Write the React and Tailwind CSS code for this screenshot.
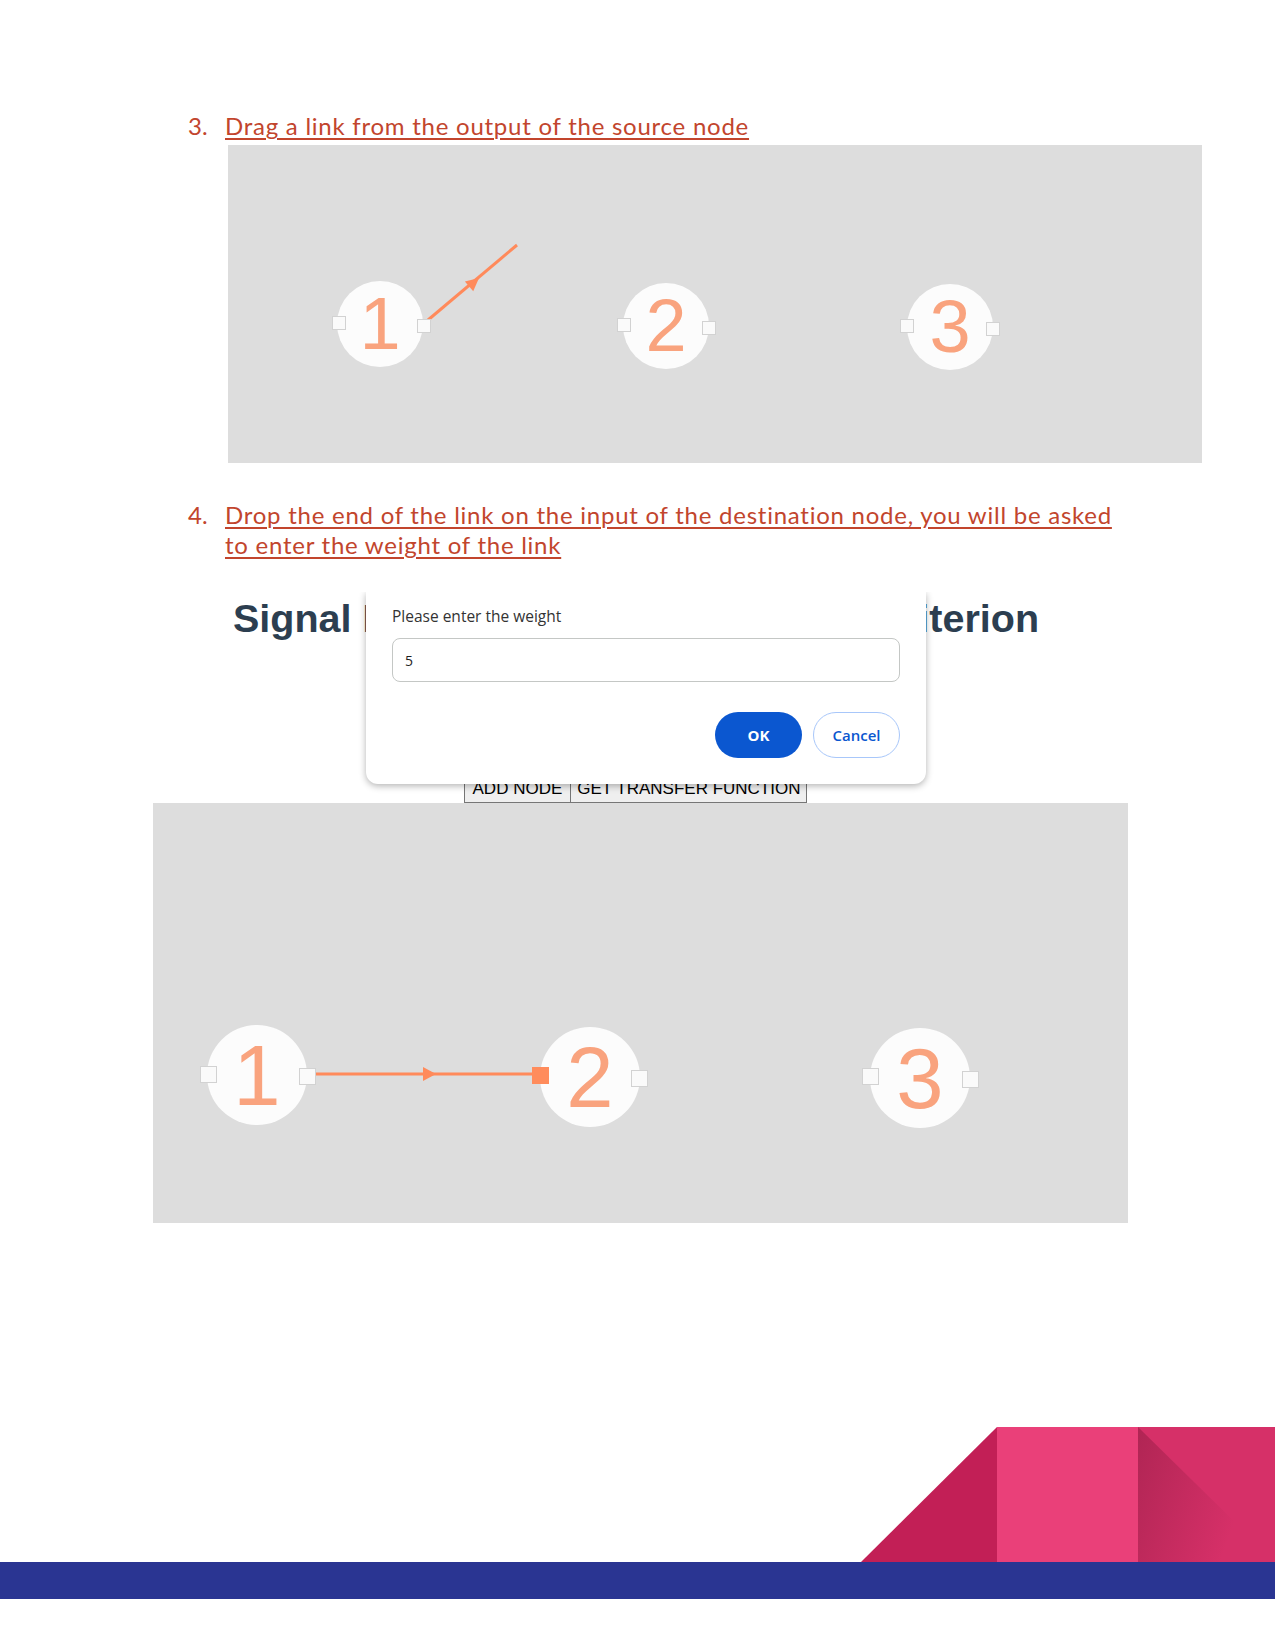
import React from 'react';

// Diagram data (coordinates are relative to each canvas)
const firstCanvas = {
    radius: 43,
    digitSize: 74,
    port: 14,
    nodes: [
        { label: '1', cx: 152, cy: 179, ports: [[104, 171], [189, 174]] },
        { label: '2', cx: 438, cy: 181, ports: [[389, 173], [474, 176]] },
        { label: '3', cx: 722, cy: 182, ports: [[672, 174], [758, 177]] },
    ],
};

const secondCanvas = {
    radius: 50,
    digitSize: 85,
    port: 17,
    nodes: [
        { label: '1', cx: 104, cy: 272, ports: [[47, 263], [146, 265]] },
        { label: '2', cx: 437, cy: 274, ports: [[379, 264, true], [478, 267]] },
        { label: '3', cx: 767, cy: 275, ports: [[709, 265], [809, 268]] },
    ],
};

const Port = ({ x, y, size, filled }) => (
    <div
        className={`absolute ${filled ? 'bg-[#ff8c5c]' : 'bg-[#fafafa] border border-[#d2d2d2]'}`}
        style={{ left: x, top: y, width: size, height: size }}
    />
);

const GraphNode = ({ node, radius, digitSize, port }) => (
    <>
        <div
            className="absolute flex items-center justify-center rounded-full bg-[#fcfcfc]"
            style={{ left: node.cx - radius, top: node.cy - radius, width: radius * 2, height: radius * 2 }}
        >
            <span
                className="font-['Liberation_Sans',Arial,sans-serif] leading-none text-[#f9a37e]"
                style={{ fontSize: digitSize }}
            >
                {node.label}
            </span>
        </div>
        {node.ports.map(([x, y, filled], i) => (
            <Port key={i} x={x} y={y} size={port} filled={filled} />
        ))}
    </>
);

const Canvas = ({ data, className, children }) => (
    <div className={`relative bg-[#dddddd] ${className}`}>
        {children}
        {data.nodes.map((node) => (
            <GraphNode
                key={node.label}
                node={node}
                radius={data.radius}
                digitSize={data.digitSize}
                port={data.port}
            />
        ))}
    </div>
);

const StepItem = ({ number, children }) => (
    <div className="flex ml-[188px] font-['Lato','Open_Sans',sans-serif] text-[24px] leading-[30px] text-[#c2452d]">
        <span className="w-[37px] shrink-0">{number}</span>
        <span className="w-[904px] tracking-[0.75px] underline decoration-[1.5px] underline-offset-[3px]">{children}</span>
    </div>
);

const WeightDialog = () => (
    // outer wrapper clips the top of the shadow, the prompt is cut off at the top
    <div className="absolute left-[356px] top-[592px] w-[580px] px-[10px] pb-[12px] overflow-hidden">
        <div className="bg-white rounded-b-[12px] shadow-[0_2px_7px_rgba(0,0,0,0.3)] pt-[14px] px-[26px] pb-[26px] font-['Open_Sans','Noto_Sans',sans-serif]">
            <p className="text-[15.5px] leading-[20px] text-[#333333]">Please enter the weight</p>
            <input
                type="text"
                value="5"
                readOnly
                className="mt-[12px] w-full h-[44px] px-[12px] border border-[#c4c7c5] rounded-[8px] text-[14px] text-[#1f1f1f] outline-none"
            />
            <div className="flex justify-end gap-[11px] mt-[30px]">
                <button className="w-[87px] h-[46px] rounded-full bg-[#0b57d0] text-white text-[15px] font-bold">
                    OK
                </button>
                <button className="w-[87px] h-[46px] rounded-full border border-[#a8c7fa] bg-white text-[#0b57d0] text-[15px] font-semibold">
                    Cancel
                </button>
            </div>
        </div>
    </div>
);

export default function App() {
    return (
        <div className="relative w-[1275px] h-[1650px] bg-white overflow-hidden">
            <div className="pt-[111px]">
                <StepItem number="3.">Drag a link from the output of the source node</StepItem>

                {/* Canvas while dragging */}
                <Canvas data={firstCanvas} className="mt-[4px] ml-[228px] w-[974px] h-[318px]">
                    <svg className="absolute inset-0" width="974" height="318">
                        <line x1="200" y1="175" x2="289" y2="100" stroke="#ff8a5b" strokeWidth="3" />
                        <g transform="translate(251 133) rotate(-40.1)">
                            <polygon points="0,0 -13,-6.5 -13,6.5" fill="#ff8a5b" />
                        </g>
                    </svg>
                </Canvas>

                <div className="mt-[37px]">
                    <StepItem number="4.">
                        Drop the end of the link on the input of the destination node, you will be asked to enter the weight of the link
                    </StepItem>
                </div>

                {/* App screenshot */}
                <h1 className="mt-[34px] pr-[3px] text-center font-['Liberation_Sans',Arial,sans-serif] font-bold text-[39.5px] leading-[48px] text-[#2c3e50]">
                    Signal Flow Graph using Mason's Criterion
                </h1>
                <div className="mt-[133px] flex justify-center pr-[4px] font-['Liberation_Sans',Arial,sans-serif] text-[17px]">
                    <button className="h-[28px] px-[8px] border border-[#767676] bg-[#efefef] text-black">ADD NODE</button>
                    <button className="h-[28px] px-[6px] border border-l-0 border-[#767676] bg-[#efefef] text-black">GET TRANSFER FUNCTION</button>
                </div>
                <Canvas data={secondCanvas} className="ml-[153px] w-[975px] h-[420px]">
                    <svg className="absolute inset-0" width="975" height="420">
                        <line x1="163" y1="271" x2="380" y2="271" stroke="#ff8a5b" strokeWidth="3" />
                        <polygon points="283,271 270,264 270,278" fill="#ff8a5b" />
                    </svg>
                </Canvas>

                {/* Page footer decoration */}
                <div className="mt-[204px]">
                    <div className="flex justify-end h-[135px]">
                        <svg width="136" height="135" viewBox="0 0 136 135">
                            <polygon points="0,135 136,0 136,135" fill="#c21f56" />
                        </svg>
                        <div className="w-[141px] bg-[#ea4079]" />
                        <svg width="137" height="135" viewBox="0 0 137 135">
                            <defs>
                                <linearGradient id="fold" x1="0" y1="0" x2="1" y2="0.35">
                                    <stop offset="0" stopColor="#8a1a40" stopOpacity="0.5" />
                                    <stop offset="0.85" stopColor="#8a1a40" stopOpacity="0" />
                                </linearGradient>
                            </defs>
                            <rect width="137" height="135" fill="#d63068" />
                            <polygon points="0,0 110,108 137,135 0,135" fill="url(#fold)" />
                        </svg>
                    </div>
                    <div className="h-[37px] bg-[#2a3592]" />
                </div>
            </div>

            <WeightDialog />
        </div>
    );
}
